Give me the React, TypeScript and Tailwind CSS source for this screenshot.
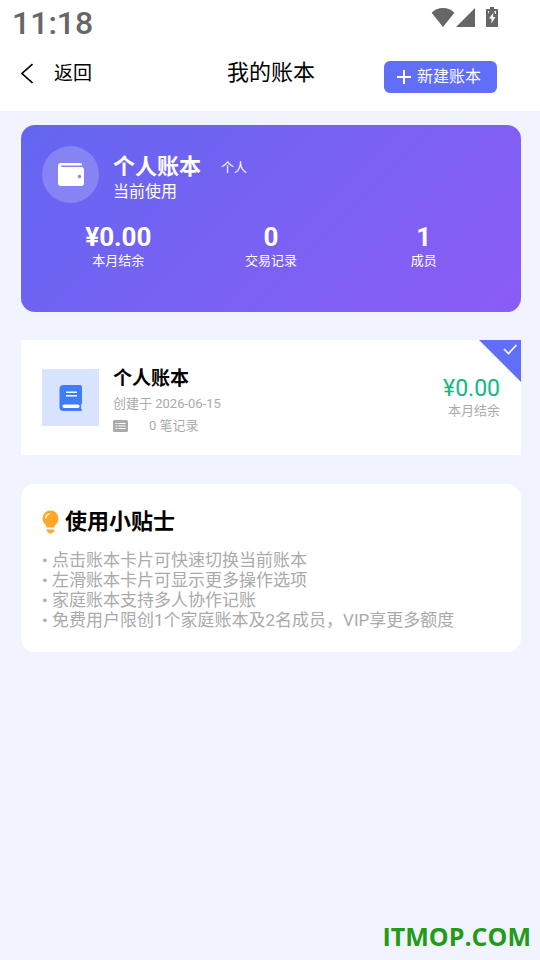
import React from "react";

function StatusBar() {
  return (
    <div className="flex h-12 items-start justify-between pl-3 pr-[42px] text-[#666666]">
      <time className="pt-1 font-[Roboto,sans-serif] text-[32px] font-medium leading-[38px]">11:18</time>
      <div className="flex items-start pt-[7px]">
        <svg className="h-5 w-6" viewBox="0 0 24 20" fill="currentColor" aria-label="Wi-Fi">
          <path d="M0.6 5.8C3.5 3 7.5 1 12 1s8.500 2 11.400 4.800L12 20Z" />
        </svg>
        <svg className="ml-px h-5 w-5" viewBox="0 0 20 20" fill="currentColor" aria-label="Signal">
          <path d="M19 1v19H0Z" />
        </svg>
        <svg className="ml-[10px] h-5 w-3" viewBox="0 0 12 20" fill="currentColor" aria-label="Battery charging">
          <path fillRule="evenodd" d="M4 0h4v2h3q1 0 1 1v16q0 1-1 1H1q-1 0-1-1V3q0-1 1-1h3ZM7.500 5.500L3 11.500h2.500v5L9.500 10H7ZM2 4v3l1.500-3ZM8.500 4h1.500v3H9Z" />
        </svg>
      </div>
    </div>
  );
}

function Header() {
  return (
    <header className="bg-white">
      <StatusBar />
      <div className="grid h-[63px] grid-cols-3 items-start pl-[21px] pr-[43px]">
        <button type="button" className="flex h-[50px] items-center gap-[21px] text-[19px] leading-6">
          <svg className="h-[21px] w-3" viewBox="0 0 12 21" fill="none" stroke="currentColor" strokeWidth="1.600" aria-hidden="true">
            <path d="M11.500 1L1 10.500L11.500 20" />
          </svg>
          <span className="pt-[2px]">返回</span>
        </button>
        <h1 className="pl-6 text-center text-[22px] font-normal leading-[50px]">我的账本</h1>
        <button type="button" className="mt-[13px] flex h-8 w-[113px] items-center gap-[6px] justify-self-end rounded-[6px] bg-[#616ef8] pl-[13px] text-base leading-6 text-white">
          <svg className="h-[14px] w-[14px]" viewBox="0 0 14 14" stroke="currentColor" strokeWidth="2" aria-hidden="true">
            <path d="M7 0v14M0 7h14" />
          </svg>
          <span className="whitespace-nowrap">新建账本</span>
        </button>
      </div>
    </header>
  );
}

const stats = [
  { value: "¥0.00", label: "本月结余" },
  { value: "0", label: "交易记录" },
  { value: "1", label: "成员" },
];

function CurrentBook() {
  return (
    <section className="h-[187px] rounded-[14px] bg-linear-135 from-[#6366f1] to-[#8b5cf6] px-[21px] pt-[21px] text-white">
      <div className="flex gap-[14px]">
        <div className="flex h-[57px] w-[57px] items-center justify-center rounded-full bg-white/20">
          <svg className="h-[26px] w-[28px]" viewBox="0 0 28 26" aria-hidden="true">
            <path fill="white" d="M4 1H23.500Q25 1 25 2.500V3.500H5Q4 3.500 4 4.250T5 5H24Q27 5 27 8V21Q27 24 24 24H4Q1 24 1 21V4Q1 1 4 1Z" />
            <circle cx="22.500" cy="14.500" r="1.700" fill="#8584f4" />
          </svg>
        </div>
        <div className="pt-2">
          <div className="flex items-center gap-5">
            <h2 className="text-[22px] font-bold leading-6">个人账本</h2>
            <span className="pt-[2px] text-[13px] leading-6">个人</span>
          </div>
          <p className="text-base leading-6">当前使用</p>
        </div>
      </div>
      <dl className="mt-[18px] grid grid-cols-3 text-center">
        {stats.map((s) => (
          <div key={s.label} className="flex flex-col-reverse">
            <dt className="text-[13px] leading-[18px]">{s.label}</dt>
            <dd className="font-[Roboto,sans-serif] text-[26px] font-bold leading-[30px]">{s.value}</dd>
          </div>
        ))}
      </dl>
    </section>
  );
}

function BookRow() {
  return (
    <article className="relative mt-7 flex h-[115px] items-center bg-white px-[21px]">
      <div className="flex h-[57px] w-[57px] items-center justify-center bg-[#d8e4ff]">
        <svg className="h-[26px] w-6" viewBox="0 0 24 26" aria-hidden="true">
          <path fill="#3f7df8" d="M4.500 0H21Q23 0 23 2V18Q23 19 22 19.500V24Q23 24 23 25T22 26H4.500Q.5 26 .5 22V4Q.5 0 4.500 0Z" />
          <path stroke="white" strokeWidth="1.500" d="M7 7.200h11M7 10.800h11" />
          <rect x="3.500" y="19.500" width="17" height="3.500" rx="1.700" fill="white" />
        </svg>
      </div>
      <div className="ml-[14px] flex-1 pt-[6px] text-[13px] text-[#aaaaaa]">
        <h2 className="text-[19px] font-bold leading-7 text-black">个人账本</h2>
        <p className="leading-[22px]">创建于 2026-06-15</p>
        <p className="flex items-center gap-[21px] leading-[22px]">
          <svg className="h-3 w-[15px]" viewBox="0 0 15 12" aria-hidden="true">
            <rect width="15" height="12" rx="1.500" fill="currentColor" />
            <path stroke="white" strokeWidth="1" d="M2.500 3.500h2M5.500 3.500h7M2.500 6h2M5.500 6h7M2.500 8.500h2M5.500 8.500h7" />
          </svg>
          0 笔记录
        </p>
      </div>
      <div className="pt-[2px] text-right">
        <p className="font-[Roboto,sans-serif] text-[23px] leading-6 text-[#12b981]">¥0.00</p>
        <p className="text-[13px] leading-5 text-[#aaaaaa]">本月结余</p>
      </div>
      <svg className="absolute right-0 top-0 h-[42px] w-[42px]" viewBox="0 0 42 42" aria-label="当前账本">
        <path fill="#616ef8" d="M0 0h42v42Z" />
        <path fill="none" stroke="white" strokeWidth="1.700" d="M25 9L29.500 13.500L37.500 5" />
      </svg>
    </article>
  );
}

const tips = [
  "点击账本卡片可快速切换当前账本",
  "左滑账本卡片可显示更多操作选项",
  "家庭账本支持多人协作记账",
  "免费用户限创1个家庭账本及2名成员，VIP享更多额度",
];

function Tips() {
  return (
    <section className="mt-[29px] rounded-[14px] bg-white px-[21px] pb-[22px] pt-[22px]">
      <h2 className="flex items-center gap-[6px] text-[22px] font-bold leading-8">
        <svg className="h-6 w-[17px]" viewBox="0 0 17 24" aria-hidden="true">
          <path fill="#ffa726" d="M8.500 .5A8 8 0 0 0 .5 8.500Q.5 12 3.200 14.500Q4.500 16 4.500 17.500H12.500Q12.500 16 13.800 14.500Q16.500 12 16.500 8.500A8 8 0 0 0 8.500 .5ZM4.500 19.500H12.500V20.500Q12.500 21.700 11 22Q10.500 23.500 8.500 23.500T6 22Q4.500 21.700 4.500 20.500Z" />
          <path fill="none" stroke="white" strokeWidth="1.300" strokeLinecap="round" d="M3.700 7.500Q4.300 4.500 7.300 3.800" />
        </svg>
        使用小贴士
      </h2>
      <ul className="mt-3 text-[17px] leading-5 text-[#aaaaaa]">
        {tips.map((tip) => (
          <li key={tip}>• {tip}</li>
        ))}
      </ul>
    </section>
  );
}

export default function App() {
  return (
    <div className="relative min-h-screen bg-[#f1f4ff] font-[Roboto,'Noto_Sans_CJK_SC',sans-serif] text-black">
      <Header />
      <main className="pb-14 pl-[21px] pr-[19px] pt-[14px]">
        <CurrentBook />
        <BookRow />
        <Tips />
      </main>
      <p className="absolute bottom-[6px] right-[9px] font-['Open_Sans',sans-serif] text-[25px] font-bold leading-9 text-[#239b16]">ITMOP.COM</p>
    </div>
  );
}
